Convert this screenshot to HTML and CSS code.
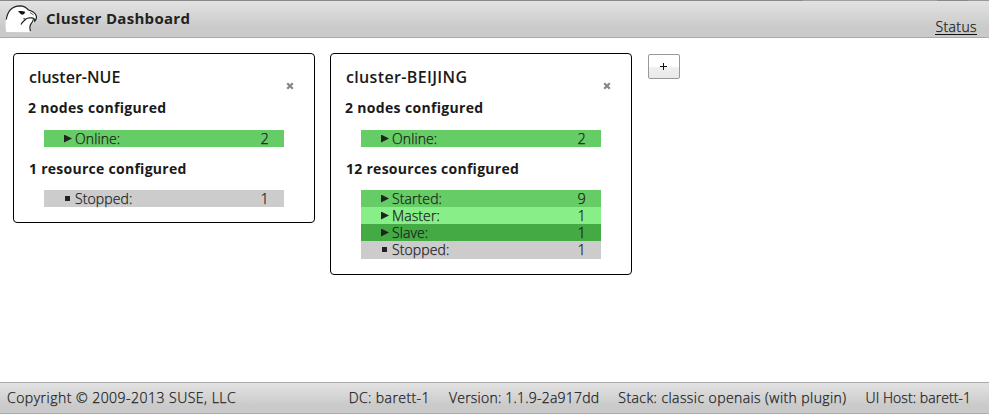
FILE: index.html
```html
<!DOCTYPE html>
<html lang="en">
<head>
<meta charset="utf-8">
<title>Cluster Dashboard</title>
<link rel="stylesheet" href="styles.css">
</head>
<body>
<header class="header">
  <svg class="logo" viewBox="0 0 32 28" width="32" height="28">
    <path d="M1.200 27C0 20 .8 14 2 10.500 4 4 9 .8 15 .8c4 0 6.500 1.500 8.500 4.200 3.500 1 6.500 3 7.800 6 .5 1.800-.3 4-1.300 5.200-1 1.500-3.400 2.500-4.200 5-.6 2-.5 4 .2 6Z" fill="#fff"/>
    <path d="M1.300 14.500C2.500 6 7.500 1 15 .8c4 0 6.300 1.600 8.500 4.200 3.500 1 6.800 3 7.800 6 .4 2-.3 4-1.500 5.200 0-2-1.200-3.500-3.400-3.300-2 .2-4-.3-5.600 1.300-2.100 1.900-4 3.200-4.800 5.300M28.300 14.500c-.3 2-1 3-2 4-1.700 2-1.800 4.500-.8 7.700M21 14.500l-2.500-1" fill="none" stroke="#222" stroke-width="1.200"/>
    <path d="M13 6.300c2-.6 4.500-.6 7.200.4l-.9 2c-1.300 1.200-3.500 1.200-4.200-.4Z" fill="#111"/>
    <path d="M25 7.500l3.500 2.500" stroke="#333" stroke-width=".8"/>
  </svg>
  <h1 class="title">Cluster Dashboard</h1>
  <a class="status">Status</a>
</header>
<main class="clusters">
  <section class="card">
    <div class="card-head"><h2 class="name nue">cluster-NUE</h2><svg class="close" viewBox="0 0 8 8" width="8" height="8"><path d="M1.200 1.200 6.800 6.800M6.800 1.200 1.200 6.800"/></svg></div>
    <h3 class="nodes">2 nodes configured</h3>
    <ul class="list">
      <li class="row online"><i class="play"></i><span>Online:</span><b>2</b></li>
    </ul>
    <h3 class="resources">1 resource configured</h3>
    <ul class="list">
      <li class="row stopped"><i class="stop"></i><span>Stopped:</span><b>1</b></li>
    </ul>
  </section>
  <section class="card">
    <div class="card-head"><h2 class="name beijing">cluster-BEIJING</h2><svg class="close" viewBox="0 0 8 8" width="8" height="8"><path d="M1.200 1.200 6.800 6.800M6.800 1.200 1.200 6.800"/></svg></div>
    <h3 class="nodes">2 nodes configured</h3>
    <ul class="list">
      <li class="row online"><i class="play"></i><span>Online:</span><b>2</b></li>
    </ul>
    <h3 class="resources">12 resources configured</h3>
    <ul class="list states">
      <li class="row online"><i class="play"></i><span>Started:</span><b>9</b></li>
      <li class="row master"><i class="play"></i><span>Master:</span><b>1</b></li>
      <li class="row slave"><i class="play"></i><span>Slave:</span><b>1</b></li>
      <li class="row stopped"><i class="stop"></i><span>Stopped:</span><b>1</b></li>
    </ul>
  </section>
  <button class="add"><svg viewBox="0 0 7 7" width="7" height="7"><path d="M3.500 0v7M0 3.500h7"/></svg></button>
</main>
<footer class="footer">
  <span class="copyright">Copyright © 2009-2013 SUSE, LLC</span>
  <span class="dc">DC: barett-1</span>
  <span class="version">Version: 1.1.9-2a917dd</span>
  <span class="stack">Stack: classic openais (with plugin)</span>
  <span class="host">UI Host: barett-1</span>
</footer>
</body>
</html>
```
FILE: styles.css
```css
* { box-sizing: border-box; }
body {
  margin: 0;
  height: 414px;
  display: flex;
  flex-direction: column;
  background: #fff;
  color: #1a1a1a;
  font: 300 14px/17px "Open Sans", "Noto Sans", sans-serif;
  overflow: hidden;
}
h1, h2, h3, ul { margin: 0; padding: 0; }
.header {
  height: 38px;
  flex: none;
  display: flex;
  align-items: flex-start;
  padding: 1px 12px 0 6px;
  border-bottom: 1px solid #aaa;
  background:
    linear-gradient(90deg, #888 803px, #a0a0a0 803px 937px, #888 937px 968px, #999 968px) 0 0 / 100% 1px no-repeat,
    linear-gradient(#e3e3e3, #cacaca 75%);
}
.logo { margin: 4px 1px 0 -1px; }
.title { margin: 7px 0 0 8px; font-size: 15px; line-height: 20px; font-weight: 700; letter-spacing: .3px; color: #222; white-space: nowrap; }
.status { margin: 17px 0 0 auto; height: 17px; border-bottom: 1px solid #111; color: #111; letter-spacing: .4px; }
.status, .row, .footer { -webkit-text-stroke: .25px #222; }
.clusters { flex: 1; display: flex; align-items: flex-start; gap: 15px; padding: 15px 13px; }
.card { width: 302px; padding: 14px 30px 15px; border: 1px solid #000; border-radius: 4px; color: #1a1a1a; }
.card-head { display: flex; justify-content: space-between; margin: 0 -9px 0 -15px; height: 31px; }
.name { margin-top: -1px; font-size: 16px; line-height: 20px; font-weight: 600; white-space: nowrap; }
.beijing { letter-spacing: .35px; }
.close { margin: 14px -.5px 0 0; stroke: #888; stroke-width: 2.3; fill: none; }
h3 { margin-left: -16px; font-size: 14px; line-height: 17px; font-weight: 700; letter-spacing: .33px; white-space: nowrap; }
.resources { margin-left: -15px; letter-spacing: .27px; }
.list { list-style: none; margin: 14px 0 13px; }
.card .list:last-child { margin: 13px 0 0; }
.states { padding-bottom: 1px; background: #ccc; }
.row { display: flex; align-items: center; height: 17px; padding: 0 15px 0 20px; color: #1a1a1a; letter-spacing: .1px; }
.row b { margin-left: auto; font-weight: 300; font-size: 14.5px; }
.play { width: 8px; height: 8px; margin-right: 3px; background: #222; clip-path: polygon(0 0, 100% 50%, 0 100%); }
.stop { width: 5px; height: 5px; margin: 0 5px 0 1px; background: #222; }
.online { background: #6c6; }
.master { background: #8e8; }
.slave { background: #4a4; }
.stopped { background: #ccc; }
.add {
  width: 32px;
  height: 25px;
  margin: 1px 0 0 1px;
  padding: 0 2px 0 0;
  display: flex;
  align-items: center;
  justify-content: center;
  border: 1px solid #999;
  border-radius: 2px;
  background: linear-gradient(#fff 50%, #f1f1f1 50%, #e8e8e8);
}
.add path { stroke: #111; stroke-width: 1; }
.footer {
  height: 32px;
  flex: none;
  display: flex;
  align-items: center;
  padding: 0 18px 1px 7px;
  gap: 19px;
  border-top: 1px solid #aaa;
  border-bottom: 1px solid #aaa;
  background: linear-gradient(#e3e3e3, #cacaca 75%);
  white-space: nowrap;
}
.copyright { margin-right: auto; letter-spacing: .48px; }
.dc { letter-spacing: .42px; }
.version { letter-spacing: .22px; }
.stack { letter-spacing: .42px; }
.host { letter-spacing: .06px; }
```
